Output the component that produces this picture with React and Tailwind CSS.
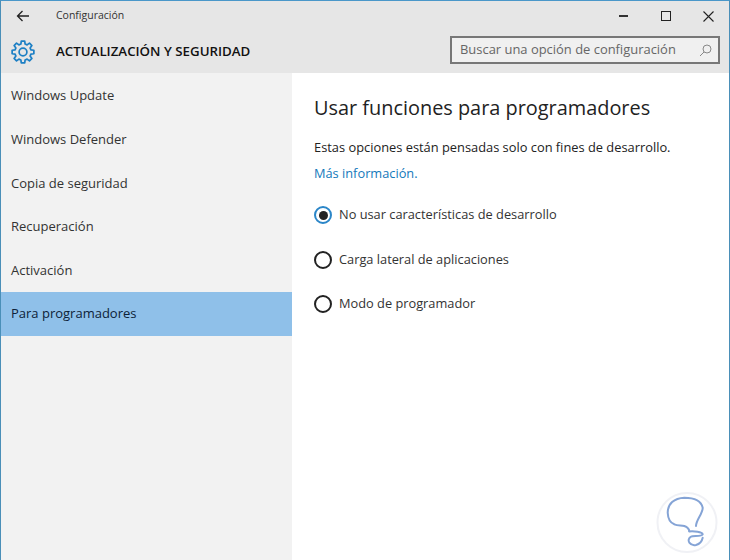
import React from 'react';

const font = { fontFamily: '"Open Sans", "Noto Sans", sans-serif' };

const menuItems = [
  'Windows Update',
  'Windows Defender',
  'Copia de seguridad',
  'Recuperación',
  'Activación',
  'Para programadores',
];

// eight rounded teeth around the centre
const point = (deg, r) => {
  const a = (deg * Math.PI) / 180;
  return `${(12 + r * Math.sin(a)).toFixed(2)} ${(12 - r * Math.cos(a)).toFixed(2)}`;
};
const gearPath =
  [0, 45, 90, 135, 180, 225, 270, 315]
    .map((d, i) => `${i === 0 ? 'M' : 'L'}${point(d - 15, 8.2)} L${point(d - 9, 11)} L${point(d + 9, 11)} L${point(d + 15, 8.2)}`)
    .join(' ') + 'Z';

function GearIcon() {
  return (
    <svg width="24" height="24" viewBox="0 0 24 24" fill="none" stroke="#1c7fc4" strokeWidth="1.7" strokeLinejoin="round">
      <path d={gearPath} />
      <circle cx="12" cy="12" r="3.9" />
    </svg>
  );
}

function Radio({ label, checked }) {
  return (
    <div className="flex items-center h-[20px]">
      <div className={`w-[18px] h-[18px] rounded-full border-2 flex items-center justify-center ${checked ? 'border-[#2b86c8]' : 'border-[#222]'}`}>
        {checked && <div className="w-[9px] h-[9px] rounded-full bg-[#222]" />}
      </div>
      <span className="ml-[7px] text-[12.8px] text-[#333]">{label}</span>
    </div>
  );
}

export default function App() {
  return (
    <div style={font} className="relative w-[730px] h-[560px] overflow-hidden bg-white flex flex-col border-t border-x border-t-[#4a97c9] border-x-[#4a8fb8]">
      <header className="h-[72px] bg-[#e6e6e6] shrink-0 flex flex-col">
        <div className="h-[30px] flex items-center">
          <svg className="ml-[15px]" width="14" height="12" viewBox="0 0 14 12" fill="none" stroke="#222" strokeWidth="1.3">
            <path d="M13 6H1.5M6.5 1 1.5 6l5 5" />
          </svg>
          <span className="ml-[26px] text-[10.5px] text-[#333]">Configuración</span>
          <div className="ml-auto flex items-center">
            <div className="w-[9px] h-[2px] bg-[#333] mr-[33px]" />
            <div className="w-[10px] h-[10px] border border-[#222] mr-[32px]" />
            <svg className="mr-[15px]" width="11" height="11" viewBox="0 0 11 11" stroke="#222" strokeWidth="1.1">
              <path d="M.5.5l10 10M10.5.5l-10 10" />
            </svg>
          </div>
        </div>
        <div className="flex items-center h-[42px]">
          <div className="ml-[10px]">
            <GearIcon />
          </div>
          <h1 className="ml-[21px] text-[13.3px] font-semibold text-[#111]">ACTUALIZACIÓN Y SEGURIDAD</h1>
          <div className="ml-auto mr-[9px] w-[270px] h-[28px] border-2 border-[#777] bg-[#f0f0f0] flex items-center justify-between pl-[8px] pr-[6px] mt-[-4px]">
            <span className="text-[12.95px] text-[#666]">Buscar una opción de configuración</span>
            <svg width="13" height="13" viewBox="0 0 13 13" fill="none" stroke="#888" strokeWidth="1">
              <circle cx="8" cy="5" r="4" />
              <path d="M5 8 1 12" />
            </svg>
          </div>
        </div>
      </header>

      <div className="flex flex-1 min-h-0">
        <nav className="w-[291px] bg-[#f2f2f2] shrink-0 pt-[1.4px]">
          {menuItems.map((item) => (
            <div
              key={item}
              className={`h-[43.6px] flex items-center pl-[10px] text-[13px] ${item === 'Para programadores' ? 'bg-[#8fc0e9] text-[#0d2238]' : 'text-[#333]'}`}
            >
              {item}
            </div>
          ))}
        </nav>
        <main className="flex-1 pl-[22px] pt-[21px]">
          <h2 className="text-[19.9px] leading-[28px] text-[#222]">Usar funciones para programadores</h2>
          <p className="mt-[15px] text-[12.85px] leading-[20px] text-[#222]">Estas opciones están pensadas solo con fines de desarrollo.</p>
          <a className="block mt-[6px] text-[12.8px] leading-[20px] text-[#1479bb]">Más información.</a>
          <div className="mt-[22px] flex flex-col gap-[24.5px]">
            <Radio label="No usar características de desarrollo" checked />
            <Radio label="Carga lateral de aplicaciones" />
            <Radio label="Modo de programador" />
          </div>
        </main>
      </div>

      <svg className="absolute left-[655px] top-[491px]" width="62" height="62" viewBox="0 0 62 62" fill="none">
        <circle cx="31" cy="30.5" r="29.5" fill="#fff" stroke="#f0f1f5" strokeWidth="2" />
        <path d="M40 34C40 28 46.7 22 46.7 15.7 45 8 36 5.7 28.3 5.7 18 6 11.7 12 11.7 20.7 12 27 15 31 18.3 32.3 22 34 25 33 28.3 34 31 35 33 37 33.3 39" stroke="#85a4d6" strokeWidth="2" strokeLinecap="round" />
        <path d="M33.3 39.5C38 39 46 40 46.7 42.3 46 45 37 43.5 35 44.7 32.5 46 32 49 33.3 50.7 35 53 38 53.5 40 53 43.5 52 46 49 46.7 45.7" stroke="#85a4d6" strokeWidth="2" strokeLinecap="round" />
      </svg>
    </div>
  );
}
